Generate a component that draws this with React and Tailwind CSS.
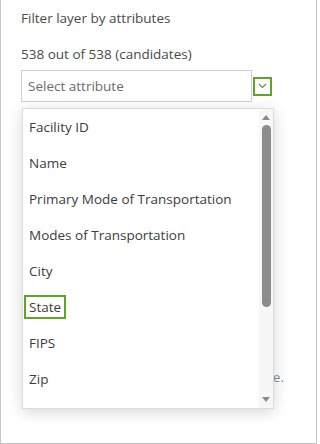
import React from 'react';

const fields = [
  'Facility ID',
  'Name',
  'Primary Mode of Transportation',
  'Modes of Transportation',
  'City',
  'State',
  'FIPS',
  'Zip',
  'Latitude',
];

const Chevron = () => (
  <svg width="9" height="6" viewBox="0 0 9 6" fill="none">
    <path d="M1 1l3.5 3.5L8 1" stroke="#7a7a7a" strokeWidth="1.1" />
  </svg>
);

const Dropdown = () => (
  <div className="absolute left-[21px] top-[108px] w-[252px] h-[301px] bg-white border border-[#dcdcdc] shadow-[0_3px_14px_rgba(0,0,0,0.16)] flex overflow-hidden">
    <ul className="flex-1 overflow-hidden">
      {fields.map((f) => (
        <li key={f} className="h-[36px] flex items-center pl-[3px] text-[13.5px] text-[#3c3c3c]">
          <span
            className={
              f === 'State'
                ? 'px-[3px] py-[1px] leading-[18px] outline-2 outline-[#5ea625]'
                : 'px-[3px]'
            }
          >
            {f}
          </span>
        </li>
      ))}
    </ul>
    <div className="w-[14px] bg-[#f7f7f7] flex flex-col items-center pt-[6px] pb-[6px]">
      <div className="w-0 h-0 border-x-[4.5px] border-x-transparent border-b-[5px] border-b-[#8a8a8a]" />
      <div className="w-[9px] h-[182px] mt-[5px] rounded-full bg-[#8c8c8c]" />
      <div className="flex-1" />
      <div className="w-0 h-0 border-x-[4.5px] border-x-transparent border-t-[5px] border-t-[#8a8a8a]" />
    </div>
  </div>
);

export default function App() {
  return (
    <div
      className="relative w-[317px] h-[444px] bg-white border-x border-b border-[#c4c4c4] pl-[20px] pt-[9px] text-[13.5px]"
      style={{ fontFamily: '"Open Sans", sans-serif' }}
    >
      <div className="leading-[18px] text-[#4a4a4a]">Filter layer by attributes</div>
      <div className="mt-[18px] leading-[18px] text-[#4a4a4a]">538 out of 538 (candidates)</div>
      <div className="mt-[7px] flex items-center gap-[1px]">
        <div className="w-[231px] h-[32px] border border-[#cfcfcf] flex items-center pl-[6px] text-[#6b6b6b]">
          Select attribute
        </div>
        <div className="w-[19px] h-[19px] border-2 border-[#5ea625] flex items-center justify-center">
          <Chevron />
        </div>
      </div>
      <div className="mt-[266px] w-[263px] flex justify-end overflow-hidden whitespace-nowrap text-[#8a8a8a] leading-[18px]">
        Pick a field to filter the layer by its value.
      </div>
      <Dropdown />
    </div>
  );
}
